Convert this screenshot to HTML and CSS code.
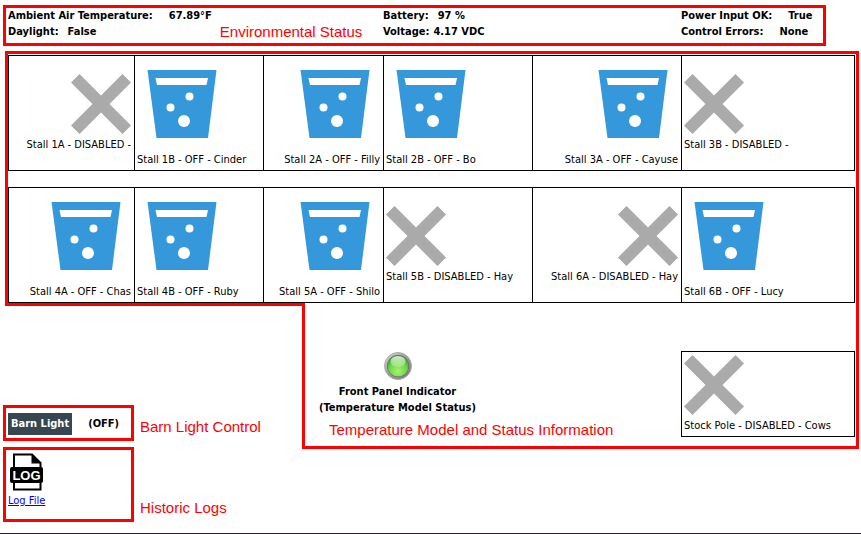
FILE: index.html
```html
<!DOCTYPE html>
<html lang="en">
<head>
<meta charset="utf-8">
<title>Barn Status</title>
<link rel="stylesheet" href="styles.css">
</head>
<body>
<svg class="sprite" aria-hidden="true">
  <symbol id="bucket" viewBox="0 0 90 90">
    <path fill="#3498db" d="M10.500 11H79.500L71 79H19.500Z"/>
    <path fill="#fff" d="M18.500 19H71L69.500 26H20Z"/>
    <circle cx="52.500" cy="37.500" r="4" fill="#fff"/>
    <circle cx="33.500" cy="48.500" r="4" fill="#fff"/>
    <circle cx="47" cy="62" r="6" fill="#fff"/>
  </symbol>
  <symbol id="cross" viewBox="0 0 60 60">
    <path fill="#aaa" d="M8.500 0L30 21.500 51.500 0 60 8.500 38.500 30 60 51.500 51.500 60 30 38.500 8.500 60 0 51.500 21.500 30 0 8.500Z"/>
  </symbol>
</svg>

<header class="env outline">
  <div class="env-col">
    <div>
      <p><span>Ambient Air Temperature:</span><span class="gap-l">67.89°F</span></p>
      <p><span>Daylight:</span><span class="gap-m">False</span></p>
    </div>
    <span class="note">Environmental Status</span>
  </div>
  <div class="env-col">
    <div>
      <p><span>Battery:</span><span class="gap-m">97 %</span></p>
      <p><span>Voltage:</span><span class="gap-s">4.17 VDC</span></p>
    </div>
  </div>
  <div class="env-col">
    <div>
      <p><span>Power Input OK:</span><span class="gap-l">True</span></p>
      <p><span>Control Errors:</span><span class="gap-l">None</span></p>
    </div>
  </div>
</header>

<main>
  <section class="stalls">
    <div class="stall-row">
      <div class="stall end"><svg class="cross"><use href="#cross"/></svg><span>Stall 1A - DISABLED -</span></div>
      <div class="stall"><svg class="bucket"><use href="#bucket"/></svg><span>Stall 1B - OFF - Cinder</span></div>
      <div class="stall end"><svg class="bucket"><use href="#bucket"/></svg><span>Stall 2A - OFF - Filly</span></div>
      <div class="stall"><svg class="bucket"><use href="#bucket"/></svg><span>Stall 2B - OFF - Bo</span></div>
      <div class="stall end"><svg class="bucket"><use href="#bucket"/></svg><span>Stall 3A - OFF - Cayuse</span></div>
      <div class="stall"><svg class="cross"><use href="#cross"/></svg><span>Stall 3B - DISABLED -</span></div>
    </div>
    <div class="stall-row">
      <div class="stall end"><svg class="bucket"><use href="#bucket"/></svg><span>Stall 4A - OFF - Chas</span></div>
      <div class="stall"><svg class="bucket"><use href="#bucket"/></svg><span>Stall 4B - OFF - Ruby</span></div>
      <div class="stall end"><svg class="bucket"><use href="#bucket"/></svg><span>Stall 5A - OFF - Shilo</span></div>
      <div class="stall"><svg class="cross"><use href="#cross"/></svg><span>Stall 5B - DISABLED - Hay</span></div>
      <div class="stall end"><svg class="cross"><use href="#cross"/></svg><span>Stall 6A - DISABLED - Hay</span></div>
      <div class="stall"><svg class="bucket"><use href="#bucket"/></svg><span>Stall 6B - OFF - Lucy</span></div>
    </div>
  </section>

  <div class="lower">
    <section class="controls">
      <div class="ledge"></div>
      <div class="control-row light-row">
        <div class="light outline"><button type="button">Barn Light</button><span>(OFF)</span></div>
        <span class="note">Barn Light Control</span>
      </div>
      <div class="control-row">
        <div class="logs outline">
          <svg class="log-icon" viewBox="0 0 34 38" role="img" aria-label="Log">
            <path d="M4 1.500H22L30.500 10V36.500H4Z" fill="#fff" stroke="#000" stroke-width="2"/>
            <path d="M21.500 1L31 10.500H21.500Z"/>
            <rect x="0" y="14" width="33" height="16" rx="2"/>
            <text x="16.500" y="27" text-anchor="middle" class="log-text">LOG</text>
          </svg>
          <a href="#log">Log File</a>
        </div>
        <span class="note">Historic Logs</span>
      </div>
    </section>

    <section class="status">
      <div class="status-main">
        <div class="indicator">
          <svg class="led" viewBox="0 0 30 30" role="img" aria-label="Green">
            <defs>
              <linearGradient id="rim" x1="0" y1="0" x2="1" y2="1"><stop offset="0" stop-color="#ddd"/><stop offset=".5" stop-color="#999"/><stop offset="1" stop-color="#777"/></linearGradient>
              <radialGradient id="lamp" cx=".5" cy=".75" r=".7"><stop offset="0" stop-color="#a4f46c"/><stop offset=".6" stop-color="#6fd548"/><stop offset="1" stop-color="#3a9f28"/></radialGradient>
              <linearGradient id="shine" x1="0" y1="0" x2="0" y2="1"><stop offset="0" stop-color="#fff" stop-opacity=".8"/><stop offset="1" stop-color="#fff" stop-opacity=".2"/></linearGradient>
            </defs>
            <circle cx="15" cy="15" r="13.500" fill="url(#rim)" stroke="#aaa"/>
            <circle cx="15" cy="15" r="11" fill="#666"/>
            <circle cx="15" cy="15" r="10.500" fill="url(#lamp)"/>
            <ellipse cx="15" cy="10.500" rx="7.500" ry="5.500" fill="url(#shine)"/>
          </svg>
          <p>Front Panel Indicator</p>
          <p>(Temperature Model Status)</p>
        </div>
        <span class="note">Temperature Model and Status Information</span>
      </div>
      <div class="pole"><svg class="cross"><use href="#cross"/></svg><span>Stock Pole - DISABLED - Cows</span></div>
    </section>
  </div>
</main>
<hr>
</body>
</html>
```
FILE: styles.css
```css
* { box-sizing: border-box; }
body {
  margin: 0;
  background: #fff;
  color: #000;
  font: 11px/16px "DejaVu Sans Condensed", "Noto Sans", sans-serif;
}
p { margin: 0; white-space: nowrap; }
span { white-space: nowrap; }
svg { display: block; }
.sprite { position: absolute; width: 0; height: 0; }
.outline { border: 3px solid #f00; }
.note { color: #f00; font: 15px/16px "Liberation Sans", Arial, sans-serif; }

.env {
  display: grid;
  grid-template-columns: 375fr 298fr 142fr;
  margin: 5px 35px 5px 3px;
  padding: 0 0 3px 2px;
  font-weight: bold;
}
.env-col { display: flex; gap: 8px; align-items: flex-end; }
.gap-s { margin-left: 4px; }
.gap-m { margin-left: 9px; }
.gap-l { margin-left: 16px; }

.stalls {
  margin: 0 2px 0 5px;
  padding: 1px 1px 0 0;
  border: solid #f00;
  border-width: 3px 3px 0;
}
.stall-row {
  display: grid;
  grid-template-columns: 126fr 129fr 120fr 149fr 149fr 173fr;
  min-height: 116px;
  border: solid #000;
  border-width: 1px 1px 1px 0;
}
.stall-row + .stall-row { margin-top: 16px; }
.stall {
  display: flex;
  flex-direction: column;
  justify-content: center;
  align-items: flex-start;
  gap: 3px;
  min-width: 0;
  padding: 0 3px 0 2px;
  border-left: 1px solid #000;
}
.end { align-items: flex-end; }
.bucket { width: 90px; height: 90px; }
.cross { width: 60px; height: 60px; }

.lower {
  display: grid;
  grid-template-columns: 302fr 559fr;
  align-items: start;
}
.controls { min-width: 0; }
.ledge { margin-left: 5px; border-top: 3px solid #f00; }
.control-row { display: flex; gap: 6px; align-items: flex-end; }
.control-row .note { margin-bottom: 6px; }
.light-row { margin: 99px 0 6px; }
.control-row .outline { width: 131px; margin-left: 3px; }
.light {
  display: flex;
  align-items: center;
  gap: 16px;
  min-height: 36px;
  padding: 1px 0 0 2px;
  font-weight: bold;
}
button {
  padding: 3px;
  border: 0;
  background: #36474f;
  color: #fff;
  font: inherit;
}
.logs { min-height: 75px; padding: 3px 2px; }
.log-icon { width: 34px; height: 38px; margin: 0 0 2px 2px; }
.log-text { font: bold 13px "Liberation Sans", Arial, sans-serif; fill: #fff; }
.logs a { color: #00f; }

.status {
  display: grid;
  grid-template-columns: 362fr 174fr;
  margin-right: 2px;
  padding: 48px 1px 8px 14px;
  border: solid #f00;
  border-width: 0 3px 3px;
}
.status-main { display: flex; flex-direction: column; align-items: flex-start; gap: 6px; }
.status-main .note { margin-left: 10px; }
.indicator { text-align: center; font-weight: bold; }
.led { width: 30px; height: 30px; margin: 0 auto 3px; }
.pole {
  display: flex;
  flex-direction: column;
  gap: 3px;
  align-self: flex-start;
  min-height: 86px;
  padding: 3px 2px 2px;
  border: 1px solid #000;
}
hr { margin: 11px 0 0; border: 0; border-top: 1px solid #4b0082; }
```
